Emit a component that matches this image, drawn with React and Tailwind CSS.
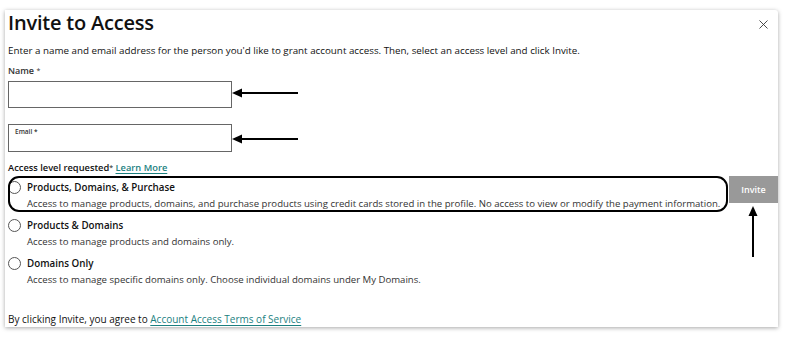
import React from 'react';
import { X } from 'lucide-react';

const options = [
  {
    title: 'Products, Domains, & Purchase',
    desc: 'Access to manage products, domains, and purchase products using credit cards stored in the profile. No access to view or modify the payment information.',
  },
  {
    title: 'Products & Domains',
    desc: 'Access to manage products and domains only.',
  },
  {
    title: 'Domains Only',
    desc: 'Access to manage specific domains only. Choose individual domains under My Domains.',
  },
];

const LeftArrow = ({ className }) => (
  <svg className={className} width="68" height="10" viewBox="0 0 68 10">
    <line x1="8" y1="5" x2="66" y2="5" stroke="#000" strokeWidth="2" />
    <polygon points="0,5 10,0.5 10,9.5" fill="#000" />
  </svg>
);

const App = () => {
  return (
    <div
      className="relative w-[789px] h-[339px] bg-white overflow-hidden text-[#111]"
      style={{ fontFamily: '"Open Sans", "Liberation Sans", sans-serif' }}
    >
      <div className="relative mt-[10px] ml-[5px] w-[773px] h-[317px] bg-white shadow-[0_1px_4px_rgba(0,0,0,0.35)] rounded-tr-[3px] pl-[3px] flex flex-col">
        {/* Header */}
        <div className="flex items-start justify-between">
          <h2 className="text-[20px] font-semibold leading-[26px] tracking-[-0.2px]">Invite to Access</h2>
          <button className="mt-[7px] mr-[7px] text-[#333]">
            <X size={15} strokeWidth={1.4} />
          </button>
        </div>

        <p className="mt-[8px] text-[9.8px] leading-[13px]">
          Enter a name and email address for the person you'd like to grant account access. Then, select an access level and click Invite.
        </p>

        <label className="mt-[8px] text-[9px] font-semibold leading-[12px] text-[#333]">
          Name <span className="font-normal text-[7px] align-top">*</span>
        </label>
        <div className="mt-[4px] w-[224px] h-[27px] border border-[#666]" />

        <div className="mt-[16px] w-[224px] h-[28px] border border-[#666] px-[6px] pt-[2px]">
          <span className="block text-[6.5px] font-semibold leading-[9px] text-[#333]">Email *</span>
        </div>

        <p className="mt-[10px] text-[9.3px] font-semibold leading-[12px]">
          Access level requested<span className="font-normal text-[7px] align-top">*</span>{' '}
          <a className="text-[#1b7f7f] underline underline-offset-2">Learn More</a>
        </p>

        {/* Options + Invite */}
        <div className="mt-[2px] flex -ml-[3px]">
          <div className="flex-1 flex flex-col gap-[1px] pl-[3px]">
            {options.map((o, i) => (
              <div key={o.title} className="relative flex gap-[6px] h-[37px] pt-[5px]">
                {i === 0 && (
                  <div className="absolute left-0 -right-[1px] top-0 h-[36px] border-2 border-black rounded-[11px] pointer-events-none" />
                )}
                <span className="w-[13px] h-[13px] shrink-0 rounded-full border border-[#555] bg-white" />
                <div className="whitespace-nowrap">
                  <div className="text-[9.8px] font-semibold leading-[13px]">{o.title}</div>
                  <div className="mt-[3px] text-[9.6px] leading-[13px] text-[#333]">{o.desc}</div>
                </div>
              </div>
            ))}
          </div>
          <button className="w-[49px] h-[27px] shrink-0 ml-[2px] bg-[#999] text-white text-[9px] font-semibold">
            Invite
          </button>
        </div>

        <p className="mt-auto mb-[1px] text-[10px] leading-[13px]">
          By clicking Invite, you agree to{' '}
          <a className="text-[#1b7f7f] underline underline-offset-2">Account Access Terms of Service</a>
        </p>
      </div>

      {/* annotation arrows */}
      <LeftArrow className="absolute left-[232px] top-[88px]" />
      <LeftArrow className="absolute left-[232px] top-[134px]" />
      <svg className="absolute left-[748px] top-[206px]" width="10" height="52" viewBox="0 0 10 52">
        <polygon points="5,0 0.5,10 9.5,10" fill="#000" />
        <line x1="5" y1="8" x2="5" y2="51" stroke="#000" strokeWidth="2" />
      </svg>
    </div>
  );
};

export default App;
